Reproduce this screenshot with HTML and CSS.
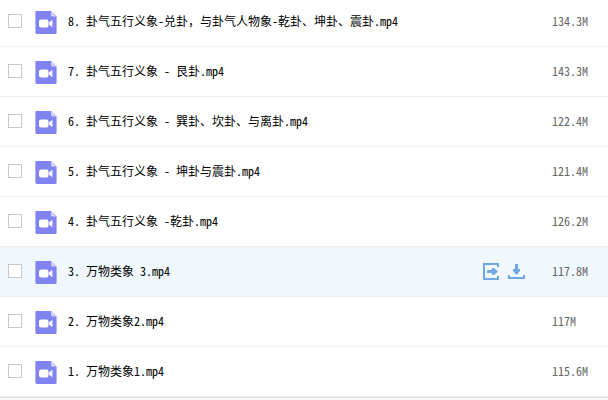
FILE: index.html
```html
<!DOCTYPE html>
<html lang="zh-CN">
<head>
    <meta charset="UTF-8">
    <meta name="viewport" content="width=device-width, initial-scale=1.0">
    <title>文件列表</title>
    <link rel="stylesheet" href="styles.css">
</head>
<body>
    <!-- Shared icons -->
    <svg class="sprite" aria-hidden="true">
        <symbol id="icon-video" viewBox="0 0 22 24">
            <path fill="#8083f0" d="M1.3 0H16L21.6 5.6V21.5Q21.6 23 20.1 23H1.8Q0.4 23 0.4 21.5V1Q0.4 0 1.3 0Z"/>
            <path fill="#d2d3fa" d="M16 0L21.6 5.6H17.5Q16 5.6 16 4.1Z"/>
            <rect fill="#fff" x="4" y="8.5" width="9.5" height="8" rx="2"/>
            <path fill="#fff" d="M14 11.5L17.4 8.7V16.3L14 13.5Z"/>
        </symbol>
        <symbol id="icon-share" viewBox="0 0 18 18">
            <path fill="none" stroke="#6fa8e4" stroke-width="2" d="M16 5V2H2V17H16V14"/>
            <path fill="#6fa8e4" d="M5 8H10V6H12L16 9.5L12 13H10V11H5Z"/>
        </symbol>
        <symbol id="icon-download" viewBox="0 0 18 18">
            <path fill="#6fa8e4" d="M7 2H10V7H12V9L8.5 13L5 9V7H7Z"/>
            <path fill="none" stroke="#6fa8e4" stroke-width="2" d="M1 13V16H16V13"/>
        </symbol>
    </svg>

    <main class="file-list">
        <div class="file-row">
            <input type="checkbox" class="file-check" id="file-8">
            <svg class="file-icon"><use href="#icon-video"/></svg>
            <label class="file-name" for="file-8">8. 卦气五行义象-兑卦<span class="full-width">，</span>与卦气人物象-乾卦、坤卦、震卦.mp4</label>
            <span class="file-size">134.3M</span>
        </div>
        <div class="file-row">
            <input type="checkbox" class="file-check" id="file-7">
            <svg class="file-icon"><use href="#icon-video"/></svg>
            <label class="file-name" for="file-7">7. 卦气五行义象 - 艮卦.mp4</label>
            <span class="file-size">143.3M</span>
        </div>
        <div class="file-row">
            <input type="checkbox" class="file-check" id="file-6">
            <svg class="file-icon"><use href="#icon-video"/></svg>
            <label class="file-name" for="file-6">6. 卦气五行义象 - 巽卦、坎卦、与离卦.mp4</label>
            <span class="file-size">122.4M</span>
        </div>
        <div class="file-row">
            <input type="checkbox" class="file-check" id="file-5">
            <svg class="file-icon"><use href="#icon-video"/></svg>
            <label class="file-name" for="file-5">5. 卦气五行义象 - 坤卦与震卦.mp4</label>
            <span class="file-size">121.4M</span>
        </div>
        <div class="file-row">
            <input type="checkbox" class="file-check" id="file-4">
            <svg class="file-icon"><use href="#icon-video"/></svg>
            <label class="file-name" for="file-4">4. 卦气五行义象 -乾卦.mp4</label>
            <span class="file-size">126.2M</span>
        </div>
        <div class="file-row active">
            <input type="checkbox" class="file-check" id="file-3">
            <svg class="file-icon"><use href="#icon-video"/></svg>
            <label class="file-name" for="file-3">3. 万物类象 3.mp4</label>
            <div class="file-actions">
                <button type="button" class="action" aria-label="分享"><svg class="action-icon"><use href="#icon-share"/></svg></button>
                <button type="button" class="action" aria-label="下载"><svg class="action-icon"><use href="#icon-download"/></svg></button>
            </div>
            <span class="file-size">117.8M</span>
        </div>
        <div class="file-row">
            <input type="checkbox" class="file-check" id="file-2">
            <svg class="file-icon"><use href="#icon-video"/></svg>
            <label class="file-name" for="file-2">2. 万物类象2.mp4</label>
            <span class="file-size">117M</span>
        </div>
        <div class="file-row">
            <input type="checkbox" class="file-check" id="file-1">
            <svg class="file-icon"><use href="#icon-video"/></svg>
            <label class="file-name" for="file-1">1. 万物类象1.mp4</label>
            <span class="file-size">115.6M</span>
        </div>
    </main>
</body>
</html>
```

FILE: styles.css
```css
:root {
    --page-bg: #f7f7f9;
    --row-bg: #fff;
    --row-active: #f0f7fd;
    --line: #f0f0f2;
    --text: #000;
    --muted: #666;
}

* {
    box-sizing: border-box;
}

body {
    margin: 0;
    overflow: hidden;
    background-color: var(--page-bg);
    color: var(--text);
    font-family: "Noto Sans CJK SC", sans-serif;
    font-size: 12px;
    line-height: 16px;
    /* half-width latin, so two letters take one hanzi */
    font-feature-settings: "hwid";
}

.sprite {
    display: none;
}

/* the list is scrolled a little under the top edge */
.file-list {
    margin-top: -3px;
    border-bottom: 1px solid #dfe1e8;
}

.file-row {
    display: flex;
    align-items: center;
    height: 50px;
    padding: 0 8px 1px;
    background-color: var(--row-bg);
    border-bottom: 1px solid var(--line);
}

.file-row.active {
    background-color: var(--row-active);
}

.file-check {
    appearance: none;
    flex: none;
    width: 14px;
    height: 14px;
    margin: 0 13px 0 0;
    background-color: #fff;
    border: 1px solid #c8c8c8;
}

.file-check:checked {
    background-color: #6fa8e4;
}

.file-icon {
    flex: none;
    width: 22px;
    height: 24px;
    margin: 4px 11px 0 0;
}

.file-name {
    flex: 1;
    white-space: nowrap;
}

.full-width {
    font-feature-settings: normal;
}

.file-actions {
    display: flex;
    gap: 8px;
    margin-right: 26px;
}

.action {
    padding: 0;
    border: 0;
    background: none;
    cursor: pointer;
}

.action-icon {
    display: block;
    width: 18px;
    height: 18px;
}

.file-size {
    flex: none;
    width: 48px;
    color: var(--muted);
}
```
